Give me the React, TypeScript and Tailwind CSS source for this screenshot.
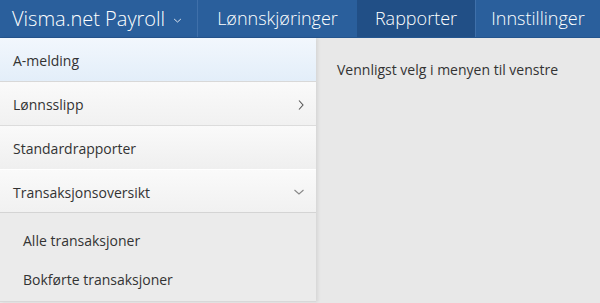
import React from "react";

const Chevron = ({ dir, className }: { dir: "down" | "right"; className?: string }) => (
  <svg width="12" height="12" viewBox="0 0 12 12" className={className} fill="none" stroke="currentColor" strokeWidth="1.1">
    {dir === "down" ? <path d="M1.5 4l4.5 4 4.5-4" /> : <path d="M4 1.5l4 4.5-4 4.5" />}
  </svg>
);

export default function App() {
  return (
    <div className="w-[600px] h-[303px] bg-[#e8e8e8] flex flex-col overflow-hidden" style={{ fontFamily: "'Open Sans', sans-serif" }}>
      <div className="h-[38px] bg-[#2a5f9c] flex items-stretch text-white shrink-0 border-b border-[#24558e] font-light">
        <div className="w-[198px] flex items-center pl-[12px] gap-[8px] border-r border-[#3f70aa] text-[20px]">
          <span>Visma.net Payroll</span>
          <Chevron dir="down" className="w-[9px] h-[9px] mt-[3px]" />
        </div>
        <div className="w-[159px] flex items-center justify-center text-[18px]">Lønnskjøringer</div>
        <div className="w-[118px] flex items-center justify-center bg-[#214f86] text-[18px]">Rapporter</div>
        <div className="flex-1 flex items-center justify-center border-l border-[#3f70aa] text-[18px]">Innstillinger</div>
      </div>
      <div className="flex flex-1">
        <div className="w-[316px] flex flex-col shadow-[2px_0_3px_rgba(0,0,0,0.08)] text-[14px] text-[#333] self-start">
          <div className="h-[44px] flex items-center pl-[13px] pt-[2px] bg-gradient-to-b from-[#f2f7fd] to-[#e3eef9] border-b border-[#d8d8d8]">A-melding</div>
          <div className="h-[44px] flex items-center justify-between pl-[13px] pr-[9px] pt-[2px] bg-gradient-to-b from-[#fafafa] to-[#f1f1f1] border-b border-[#dcdcdc]">
            <span>Lønnsslipp</span>
            <Chevron dir="right" className="text-[#555]" />
          </div>
          <div className="h-[44px] flex items-center pl-[13px] pt-[2px] bg-gradient-to-b from-[#fafafa] to-[#efefef] border-b border-[#ffffff]">Standardrapporter</div>
          <div className="h-[43px] flex items-center justify-between pl-[13px] pr-[11px] pt-[2px] bg-gradient-to-b from-[#fafafa] to-[#f1f1f1] border-b border-[#d4d4d4]">
            <span>Transaksjonsoversikt</span>
            <Chevron dir="down" className="text-[#888]" />
          </div>
          <div className="h-[89px] flex flex-col bg-[#ebebeb] border-b border-[#d8d8d8] pt-[17px] gap-[19px]">
            <div className="h-[20px] flex items-center pl-[23px]">Alle transaksjoner</div>
            <div className="h-[20px] flex items-center pl-[23px]">Bokførte transaksjoner</div>
          </div>
        </div>
        <div className="flex-1 pl-[21px] pt-[21px] text-[14px] text-[#333]">Vennligst velg i menyen til venstre</div>
      </div>
    </div>
  );
}
